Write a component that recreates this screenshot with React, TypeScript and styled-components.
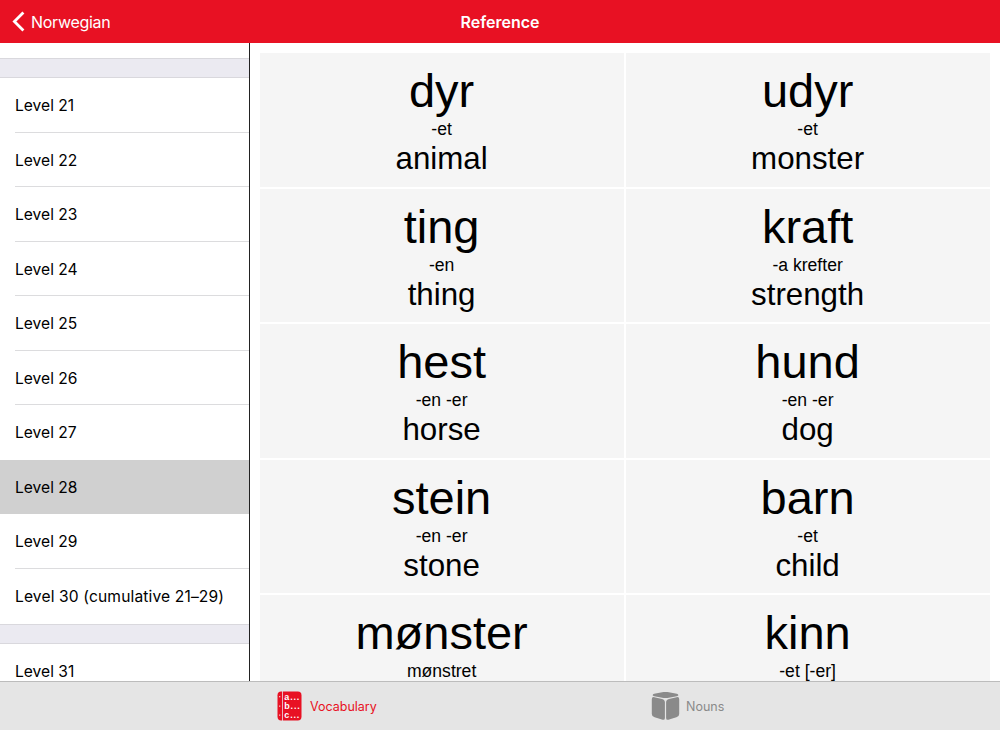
import styled, { createGlobalStyle } from "styled-components";

interface Level {
    name: string;
    selected?: boolean;
    wide?: boolean;
}

interface Entry {
    word: string;
    forms: string;
    meaning: string;
}

const levels: Level[] = [
    { name: "Level 21" },
    { name: "Level 22" },
    { name: "Level 23" },
    { name: "Level 24" },
    { name: "Level 25" },
    { name: "Level 26" },
    { name: "Level 27" },
    { name: "Level 28", selected: true },
    { name: "Level 29" },
    { name: "Level 30 (cumulative 21–29)", wide: true },
];

const nextLevels: Level[] = [{ name: "Level 31" }];

const entries: Entry[] = [
    { word: "dyr", forms: "-et", meaning: "animal" },
    { word: "udyr", forms: "-et", meaning: "monster" },
    { word: "ting", forms: "-en", meaning: "thing" },
    { word: "kraft", forms: "-a krefter", meaning: "strength" },
    { word: "hest", forms: "-en -er", meaning: "horse" },
    { word: "hund", forms: "-en -er", meaning: "dog" },
    { word: "stein", forms: "-en -er", meaning: "stone" },
    { word: "barn", forms: "-et", meaning: "child" },
    { word: "mønster", forms: "mønstret", meaning: "" },
    { word: "kinn", forms: "-et [-er]", meaning: "" },
];

const GlobalStyle = createGlobalStyle`
    * {
        box-sizing: border-box;
    }

    body {
        margin: 0;
        overflow: hidden;
        background: #fff;
        color: #000;
        font-family: Inter, "Liberation Sans", sans-serif;
    }
`;

const Screen = styled.div`
    display: flex;
    flex-direction: column;
    height: 730px;
    overflow: hidden;
`;

const NavBar = styled.header`
    display: grid;
    grid-template-columns: 1fr auto 1fr;
    align-items: center;
    flex: none;
    height: 43px;
    padding: 0 12px;
    background: #e81123;
    color: #fff;
    font-size: 16px;
`;

const BackButton = styled.a`
    display: flex;
    align-items: center;
    gap: 6px;
    letter-spacing: -0.3px;
`;

const Title = styled.h1`
    margin: 0;
    font-size: 16px;
    font-weight: 600;
    letter-spacing: 0;
`;

const Body = styled.main`
    display: flex;
    flex: 1;
    min-height: 0;
`;

const Sidebar = styled.nav`
    flex: none;
    width: 250px;
    overflow: hidden;
    padding-top: 14.8px;
    border-right: 1px solid #222;
`;

const SectionGap = styled.div`
    height: 20.2px;
    background: #ebeaf1;
    border-top: 1px solid #d9d8dd;
    border-bottom: 1px solid #d9d8dd;
`;

const LevelRow = styled.div<{ $selected?: boolean }>`
    height: 54.57px;
    padding-left: ${p => (p.$selected ? 0 : "15px")};
    background: ${p => (p.$selected ? "#d0d0d0" : "#fff")};
`;

const LevelLabel = styled.div<{ $last?: boolean; $wide?: boolean; $indent?: boolean }>`
    height: 100%;
    padding-left: ${p => (p.$indent ? "15px" : 0)};
    line-height: 55px;
    font-size: 15.6px;
    letter-spacing: ${p => (p.$wide ? "0.13px" : 0)};
    white-space: nowrap;
    border-bottom: ${p => (p.$last ? "none" : "1px solid #dcdcde")};
`;

const Content = styled.section`
    flex: 1;
    overflow: hidden;
    padding: 10px 10px 0;
`;

const WordGrid = styled.div`
    display: grid;
    grid-template-columns: 1fr 1fr;
    grid-auto-rows: 133.6px;
    gap: 2px;
`;

const WordCard = styled.div`
    display: flex;
    flex-direction: column;
    align-items: center;
    padding: 11px 0.8px 0 0;
    background: #f5f5f5;
    font-family: "Liberation Sans", Arial, sans-serif;
`;

const Word = styled.div`
    font-size: 47px;
    line-height: 54px;
`;

const Forms = styled.div`
    font-size: 17.6px;
    line-height: 22px;
`;

const Meaning = styled.div`
    font-size: 31.3px;
    line-height: 37px;
`;

const TabBar = styled.footer`
    display: grid;
    grid-template-columns: 374px 1fr;
    flex: none;
    height: 49px;
    padding-left: 277px;
    background: #e5e5e5;
    border-top: 1px solid #bcbcbc;
`;

const Tab = styled.div<{ $active?: boolean }>`
    display: flex;
    align-items: center;
    gap: ${p => (p.$active ? "8px" : "6px")};
    color: ${p => (p.$active ? "#e81123" : "#8a8a8a")};
    font-size: 12.5px;
`;

export default function App() {
    return (
        <Screen>
            <GlobalStyle />
            <NavBar>
                <BackButton>
                    <ChevronIcon />
                    Norwegian
                </BackButton>
                <Title>Reference</Title>
            </NavBar>
            <Body>
                <Sidebar>
                    <SectionGap />
                    {renderLevels(levels)}
                    <SectionGap />
                    {renderLevels(nextLevels)}
                </Sidebar>
                <Content>
                    <WordGrid>
                        {entries.map(e => (
                            <WordCard key={e.word}>
                                <Word>{e.word}</Word>
                                <Forms>{e.forms}</Forms>
                                {e.meaning && <Meaning>{e.meaning}</Meaning>}
                            </WordCard>
                        ))}
                    </WordGrid>
                </Content>
            </Body>
            <TabBar>
                <Tab $active>
                    <VocabularyIcon />
                    Vocabulary
                </Tab>
                <Tab>
                    <CubeIcon />
                    Nouns
                </Tab>
            </TabBar>
        </Screen>
    );

    function renderLevels(items: Level[]) {
        return items.map((l, i) => (
            <LevelRow key={l.name} $selected={l.selected}>
                <LevelLabel
                    $last={i === items.length - 1 || l.selected || items[i + 1]?.selected}
                    $wide={l.wide}
                    $indent={l.selected}
                >
                    {l.name}
                </LevelLabel>
            </LevelRow>
        ));
    }
}

function ChevronIcon() {
    return (
        <svg width="13" height="21" viewBox="0 0 13 21" fill="none">
            <path d="M11.4 1.4 2.4 10.5l9 9.1" stroke="#fff" strokeWidth="2.8" />
        </svg>
    );
}

function VocabularyIcon() {
    return (
        <svg width="25" height="30" viewBox="0 0 25 30">
            <path d="M4.2 .5H5v29h-.8A3.7 3.7 0 0 1 .5 25.8V4.2A3.7 3.7 0 0 1 4.2.5Z" fill="currentColor" />
            <path d="M5.8 .5h15a3.7 3.7 0 0 1 3.7 3.7v21.6a3.7 3.7 0 0 1-3.7 3.7h-15Z" fill="currentColor" />
            <g fill="#f3b8bd">
                <rect x="2" y="5" width="1.3" height="1.3" />
                <rect x="2" y="14.5" width="1.3" height="1.3" />
                <rect x="2" y="23.5" width="1.3" height="1.3" />
            </g>
            <g fill="#fff" fontFamily="Liberation Sans, sans-serif" fontSize="9" fontWeight="700">
                <text x="7.3" y="8.7" textLength="15">a...</text>
                <text x="7.3" y="17.7" textLength="15.4">b...</text>
                <text x="7.3" y="26.7" textLength="15">c...</text>
            </g>
        </svg>
    );
}

function CubeIcon() {
    return (
        <svg width="29" height="30" viewBox="0 0 29 30" fill="currentColor">
            <path d="M1.6 4.2Q1.8 3.2 3.2 2.8L12.5 1.1q2-.3 4 0l9.3 1.7q1.4.4 1.6 1.4-.2.7-1.6 1l-9.3 1.7q-2 .4-4 0L3.2 5.2Q1.8 4.9 1.6 4.2Z" />
            <path d="M3.4 6.2 11 7.9q2.9.7 2.9 3.4v15.6q0 2.3-2.2 1.8l-8.1-2.4Q.8 25.5.8 22.9V8.2q0-2.6 2.6-2Z" />
            <path d="M25.6 6.2 18 7.9q-2.9.7-2.9 3.4v15.6q0 2.3 2.2 1.8l8.1-2.4q2.8-.8 2.8-3.4V8.2q0-2.6-2.6-2Z" />
        </svg>
    );
}
